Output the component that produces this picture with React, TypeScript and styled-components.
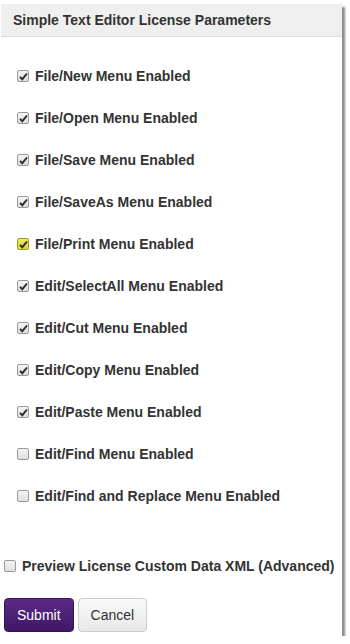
import React, { useState } from "react";
import styled, { createGlobalStyle } from "styled-components";

const GlobalStyle = createGlobalStyle`
  html, body {
    margin: 0;
    padding: 0;
    background: #ffffff;
    font-family: "Liberation Sans", Arial, sans-serif;
  }
`;

interface IOption {
  label: string;
  checked: boolean;
  focused?: boolean;
}

const options: IOption[] = [
  { label: "File/New Menu Enabled", checked: true },
  { label: "File/Open Menu Enabled", checked: true },
  { label: "File/Save Menu Enabled", checked: true },
  { label: "File/SaveAs Menu Enabled", checked: true },
  { label: "File/Print Menu Enabled", checked: true, focused: true },
  { label: "Edit/SelectAll Menu Enabled", checked: true },
  { label: "Edit/Cut Menu Enabled", checked: true },
  { label: "Edit/Copy Menu Enabled", checked: true },
  { label: "Edit/Paste Menu Enabled", checked: true },
  { label: "Edit/Find Menu Enabled", checked: false },
  { label: "Edit/Find and Replace Menu Enabled", checked: false },
];

const Panel = styled.div`
  width: 342px;
  margin-top: 4px;
  background: #fff;
  box-shadow: 3px 3px 2px rgba(0, 0, 0, 0.45);
  padding-bottom: 4px;
  display: flex;
  flex-direction: column;
`;

const Header = styled.div`
  height: 32px;
  display: flex;
  align-items: center;
  padding-left: 12px;
  margin-left: 1px;
  background: #efefef;
  border-bottom: 1px solid #dcdcdc;
  font-size: 14px;
  font-weight: bold;
  color: #333;
`;

const List = styled.div`
  display: flex;
  flex-direction: column;
  padding-top: 18px;
  padding-left: 17px;
`;

const Row = styled.label`
  height: 42px;
  display: flex;
  align-items: center;
  gap: 6px;
  font-size: 14px;
  font-weight: bold;
  color: #333;
  cursor: pointer;
`;

const Box = styled.span<{ $focused?: boolean }>`
  width: 10px;
  height: 10px;
  flex: none;
  border: 1px solid ${(p) => (p.$focused ? "#a09a20" : "#9a9a9a")};
  border-radius: 2px;
  background: ${(p) =>
    p.$focused
      ? "linear-gradient(#f0ea5a, #dcd43a)"
      : "linear-gradient(#f4f4f4, #dedede)"};
  display: flex;
  align-items: center;
  justify-content: center;
`;

const HiddenInput = styled.input`
  display: none;
`;

const PreviewRow = styled(Row)`
  height: 18px;
  margin-top: 40px;
  padding-left: 4px;
`;

const Buttons = styled.div`
  display: flex;
  gap: 4px;
  margin-top: 23px;
  padding-left: 4px;
`;

const Button = styled.button<{ $primary?: boolean }>`
  height: 34px;
  padding: 0 12px;
  font-family: "Liberation Sans", Arial, sans-serif;
  font-size: 14px;
  border-radius: 4px;
  cursor: pointer;
  color: ${(p) => (p.$primary ? "#fff" : "#333")};
  border: 1px solid ${(p) => (p.$primary ? "#35124f" : "#cccccc")};
  background: ${(p) =>
    p.$primary
      ? "linear-gradient(#5b2b87, #3f1763)"
      : "linear-gradient(#fafafa, #e8e8e8)"};
`;

function Check({ checked, focused }: { checked: boolean; focused?: boolean }) {
  return (
    <Box $focused={focused}>
      {checked && (
        <svg width="9" height="9" viewBox="0 0 9 9">
          <path
            d="M1 4.8 L3.3 7.2 L8 1.5"
            fill="none"
            stroke="#2a2a2a"
            strokeWidth="1.9"
          />
        </svg>
      )}
    </Box>
  );
}

function CheckRow({ option }: { option: IOption }) {
  const [checked, setChecked] = useState(option.checked);
  return (
    <Row>
      <HiddenInput
        type="checkbox"
        checked={checked}
        onChange={() => setChecked(!checked)}
      />
      <Check checked={checked} focused={option.focused} />
      {option.label}
    </Row>
  );
}

export default function App() {
  const [preview, setPreview] = useState(false);
  return (
    <>
      <GlobalStyle />
      <Panel>
        <Header>Simple Text Editor License Parameters</Header>
        <List>
          {options.map((o) => (
            <CheckRow key={o.label} option={o} />
          ))}
        </List>
        <PreviewRow>
          <HiddenInput
            type="checkbox"
            checked={preview}
            onChange={() => setPreview(!preview)}
          />
          <Check checked={preview} />
          Preview License Custom Data XML (Advanced)
        </PreviewRow>
        <Buttons>
          <Button $primary>Submit</Button>
          <Button>Cancel</Button>
        </Buttons>
      </Panel>
    </>
  );
}
